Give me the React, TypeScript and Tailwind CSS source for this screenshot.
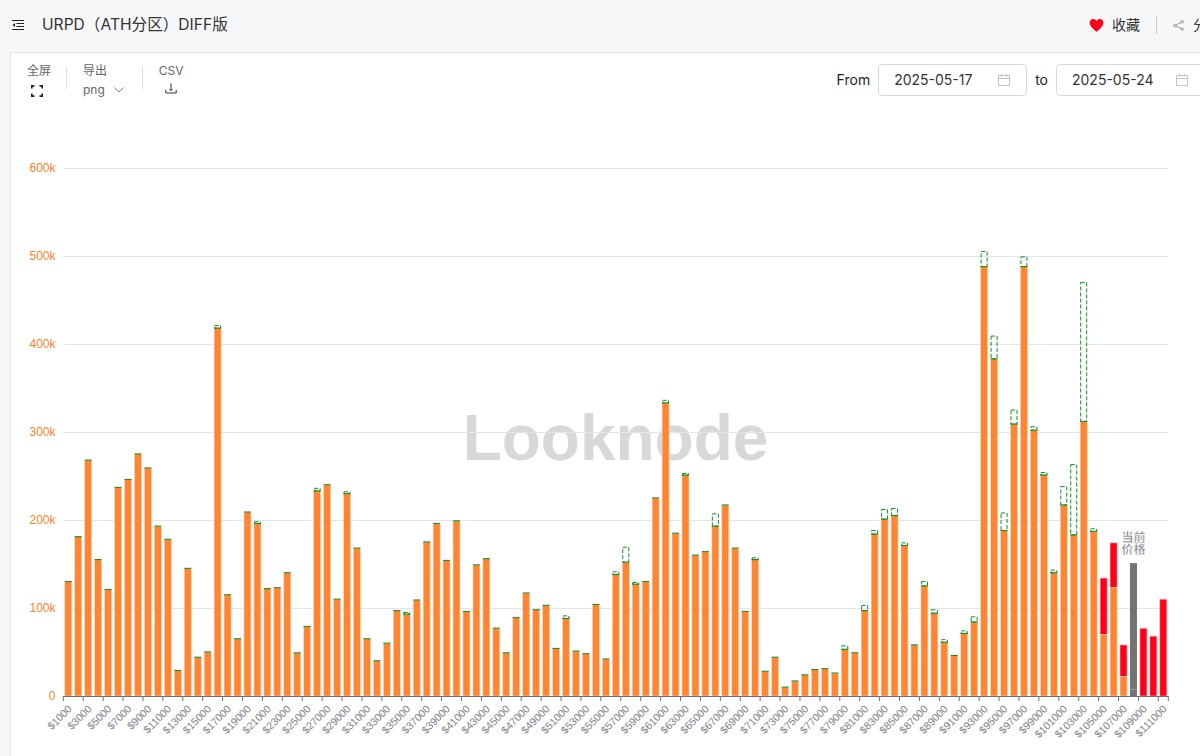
import React from 'react';

// [value, diffTop] in k, diffTop only where the dashed box sticks out
const bars: [number, number?][] = [
  [130], [181], [268], [155], [121], [237], [246], [275], [259], [193], [178], [29], [145], [44], [50], [418, 421],
  [115], [65], [209], [196, 198], [122], [123], [140], [49], [79], [233, 236], [240], [110], [230, 232], [168],
  [65], [40], [60], [97], [93, 95], [109], [175], [196], [154], [199], [96], [149], [156], [77], [49], [89], [117],
  [98], [103], [54], [88, 91], [51], [48], [104], [42], [138, 141], [152, 169], [127, 129], [130], [225], [333, 336],
  [185], [251, 253], [160], [164], [193, 207], [217], [168], [96], [155, 157], [28], [44], [10], [17], [24], [30],
  [31], [26], [53, 57], [49], [97, 103], [184, 188], [201, 212], [205, 213], [171, 174], [58], [125, 130], [94, 98],
  [61, 64], [46], [71, 74], [84, 90], [488, 505], [383, 409], [188, 208], [309, 325], [488, 499], [302, 306],
  [251, 254], [140, 143], [217, 238], [183, 263], [312, 470], [187, 190],
];

// bars above the current price: orange part plus the red part on top
const redBars: [number, number, number][] = [
  [104, 70, 134],
  [105, 123, 174],
  [106, 22, 58],
  [108, 0, 77],
  [109, 0, 68],
  [110, 0, 110],
];

const left = 63.3;
const band = 9.955;
const barW = 7;
const y0 = 696;
const yOf = (k: number) => y0 - k * 0.88;
const centerOf = (i: number) => left + band * i + band / 2;

function Chart() {
  const ticks = Array.from({ length: 56 }, (_, i) => i * 2);
  return (
    <svg viewBox="11 120 1189 636" className="block w-[1189px] h-[636px] shrink-0">
      {/* watermark */}
      <text x="615.500" y="460" textAnchor="middle" fontSize="64" fontWeight="700" fill="#d8d8d8" fontFamily="'Liberation Sans', sans-serif">
        Looknode
      </text>

      {/* grid and y labels */}
      {[100, 200, 300, 400, 500, 600].map((k) => (
        <line key={k} x1="63" x2="1168" y1={yOf(k) + 0.5} y2={yOf(k) + 0.5} stroke="#e0e6f1" />
      ))}
      {[0, 100, 200, 300, 400, 500, 600].map((k) => (
        <text key={k} x="55.500" y={yOf(k) + 4} textAnchor="end" fontSize="12" fill="#ff7f2a" fontFamily="'Liberation Sans', sans-serif">
          {k === 0 ? '0' : `${k}k`}
        </text>
      ))}

      {/* orange bars with the dashed diff on top */}
      {bars.map(([v, top], i) => {
        const x = centerOf(i) - barW / 2;
        return (
          <g key={i}>
            <rect x={x} y={yOf(v)} width={barW} height={y0 - yOf(v)} fill="#ff8533" stroke="#ffd9bf" strokeWidth="0.6" />
            <rect x={x} y={yOf(v) - 0.6} width={barW} height="1.1" fill="#1f8f2a" />
            {top && (
              <rect
                x={x + 0.5}
                y={yOf(top)}
                width={barW - 1}
                height={yOf(v) - yOf(top)}
                fill="none"
                stroke="#0f8f20"
                strokeWidth="1"
                strokeDasharray="4 2"
              />
            )}
          </g>
        );
      })}

      {redBars.map(([i, orange, top]) => {
        const x = centerOf(i) - barW / 2;
        return (
          <g key={i}>
            <rect x={x} y={yOf(top)} width={barW} height={yOf(orange) - yOf(top)} fill="#ff0018" stroke="#ffb3ba" strokeWidth="0.6" />
            {orange > 0 && <rect x={x} y={yOf(orange)} width={barW} height={y0 - yOf(orange)} fill="#ff8533" stroke="#ffd9bf" strokeWidth="0.6" />}
          </g>
        );
      })}

      {/* current price */}
      <rect x={centerOf(107) - barW / 2} y={yOf(151)} width={barW} height={y0 - yOf(151)} fill="#737373" />
      <rect x={centerOf(107) - barW / 2} y={yOf(8)} width={barW} height="0.8" fill="#a8a8a8" />
      <text
        fontSize="12"
        fontWeight="700"
        fill="#666666"
        stroke="#ffffff"
        strokeOpacity="0.7"
        strokeWidth="0.8"
        textAnchor="middle"
        fontFamily="'Noto Sans CJK SC', sans-serif"
      >
        <tspan x="1133.500" y="542">当前</tspan>
        <tspan x="1133.500" y="554">价格</tspan>
      </text>

      {/* x axis */}
      <line x1="63" x2="1168.500" y1="696.500" y2="696.500" stroke="#6e7079" />
      {ticks.map((i) => (
        <line key={i} x1={left + band * i} x2={left + band * i} y1="696" y2="701" stroke="#6e7079" />
      ))}
      <line x1="1168.300" x2="1168.300" y1="696" y2="701" stroke="#6e7079" />
      {ticks.map((i) => (
        <text
          key={i}
          transform={`translate(${centerOf(i) - 1.5} 704) rotate(-45)`}
          textAnchor="end"
          fontSize="10.500"
          dominantBaseline="hanging"
          fill="#7d7f87"
          fontFamily="'Liberation Sans', sans-serif"
        >
          ${(i + 1) * 1000}
        </text>
      ))}
    </svg>
  );
}

function CalendarIcon() {
  return (
    <svg viewBox="0 0 14 14" className="w-[14px] h-[14px]" fill="none" stroke="#c4c4c4" strokeWidth="1">
      <rect x="1.500" y="2.500" width="11" height="10" />
      <path d="M1.500 5.500h11M4.500 1v2.500M9.500 1v2.500" />
    </svg>
  );
}

function DateInput({ value }: { value: string }) {
  return (
    <div className="flex items-center justify-between w-[149px] h-8 shrink-0 pl-[15px] pr-[15px] bg-white border border-[#d9d9d9] rounded text-sm text-[#333]">
      <span>{value}</span>
      <CalendarIcon />
    </div>
  );
}

export default function App() {
  return (
    <div className="w-[1200px] h-[756px] overflow-hidden bg-[#f6f7f9] font-['Inter','Noto_Sans_CJK_SC',sans-serif]">
      {/* header */}
      <div className="flex items-center justify-between w-[1230px] h-[52px] pb-[2px] pl-3 pr-[9px]">
        <div className="flex items-center gap-[18px]">
          <svg viewBox="0 0 12 12" className="w-3 h-3" fill="none" stroke="#222" strokeWidth="1">
            <path d="M0 1.500h12M4.500 4.500h7.500M4.500 7.500h7.500M0 10.500h12" />
            <path d="M3 4L0.500 6L3 8Z" fill="#222" stroke="none" />
          </svg>
          <h1 className="text-[15.600px] text-[#333]">URPD（ATH分区）DIFF版</h1>
        </div>
        <div className="flex items-center text-sm text-[#333]">
          <svg viewBox="0 0 24 24" className="w-[15px] h-[15px] mr-2" fill="#ff0018">
            <path d="M12 22C5 16 1 12 1 7.500C1 4 3.600 1.500 6.800 1.500C9 1.500 11 2.700 12 4.600C13 2.700 15 1.500 17.200 1.500C20.400 1.500 23 4 23 7.500C23 12 19 16 12 22Z" />
          </svg>
          <span>收藏</span>
          <div className="w-px h-[18px] bg-[#c9c9c9] mx-4" />
          <svg viewBox="0 0 12 12" className="w-[11px] h-[11px] mr-[9px]" fill="none" stroke="#888" strokeWidth="0.9">
            <circle cx="2" cy="6" r="1.400" />
            <circle cx="10" cy="2" r="1.400" />
            <circle cx="10" cy="10" r="1.400" />
            <path d="M3.300 5.300L8.700 2.700M3.300 6.700L8.700 9.300" />
          </svg>
          <span>分享</span>
        </div>
      </div>

      {/* card */}
      <div className="flex flex-col w-[1230px] h-[720px] ml-[10px] bg-white border border-[#e3e4e6]">
        <div className="flex items-start justify-between h-[67px] pl-4 pr-[34px] pt-[10px] shrink-0">
          <div className="flex items-start text-xs text-[#666]">
            <div className="flex flex-col items-center gap-[6px] pr-[15px]">
              <span>全屏</span>
              <svg viewBox="0 0 12 12" className="w-3 h-3 -translate-x-[2px]" fill="none" stroke="#222" strokeWidth="1.700">
                <path d="M0.800 3.500V0.800H3.500M8.500 0.800H11.200V3.500M11.200 8.500V11.200H8.500M3.500 11.200H0.800V8.500" />
              </svg>
            </div>
            <div className="w-px h-[22px] mt-1 bg-[#dcdcdc]" />
            <div className="flex flex-col gap-[3px] pl-4 pr-[18px]">
              <span>导出</span>
              <span className="flex items-center gap-[9px]">
                png
                <svg viewBox="0 0 10 6" className="w-[10px] h-[6px]" fill="none" stroke="#777" strokeWidth="0.9">
                  <path d="M0.500 0.500L5 5L9.500 0.500" />
                </svg>
              </span>
            </div>
            <div className="w-px h-[22px] mt-1 bg-[#dcdcdc]" />
            <div className="flex flex-col items-center gap-[3px] pl-4">
              <span>CSV</span>
              <svg viewBox="0 0 12 12" className="w-3 h-3" fill="none" stroke="#333" strokeWidth="1">
                <path d="M6 1.500V8.500M4.300 6.800L6 8.500L7.700 6.800M0.800 8V11H11.200V8" />
              </svg>
            </div>
          </div>
          <div className="flex items-center gap-2 mt-px text-sm text-[#222]">
            <span>From</span>
            <DateInput value="2025-05-17" />
            <span>to</span>
            <DateInput value="2025-05-24" />
          </div>
        </div>
        <Chart />
      </div>
    </div>
  );
}
